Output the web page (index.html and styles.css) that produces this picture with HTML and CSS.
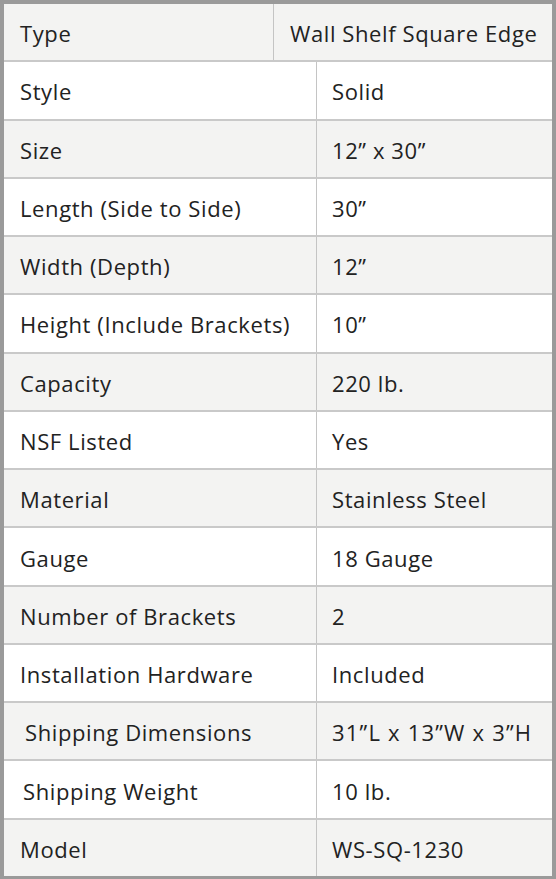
FILE: index.html
```html
<!DOCTYPE html>
<html>
<head>
<meta charset="utf-8">
<link rel="stylesheet" href="styles.css">
</head>
<body>
<div class="frame">
  <div class="row head"><div class="k">Type</div><div class="v">Wall Shelf Square Edge</div></div>
  <div class="row"><div class="k">Style</div><div class="v">Solid</div></div>
  <div class="row alt"><div class="k">Size</div><div class="v">12” x 30”</div></div>
  <div class="row"><div class="k">Length (Side to Side)</div><div class="v">30”</div></div>
  <div class="row alt"><div class="k">Width (Depth)</div><div class="v">12”</div></div>
  <div class="row"><div class="k">Height (Include Brackets)</div><div class="v">10”</div></div>
  <div class="row alt"><div class="k">Capacity</div><div class="v">220 lb.</div></div>
  <div class="row"><div class="k">NSF Listed</div><div class="v">Yes</div></div>
  <div class="row alt"><div class="k">Material</div><div class="v">Stainless Steel</div></div>
  <div class="row"><div class="k">Gauge</div><div class="v">18 Gauge</div></div>
  <div class="row alt"><div class="k">Number of Brackets</div><div class="v">2</div></div>
  <div class="row"><div class="k">Installation Hardware</div><div class="v">Included</div></div>
  <div class="row alt"><div class="k ind">Shipping Dimensions</div><div class="v wide">31”L x 13”W x 3”H</div></div>
  <div class="row"><div class="k ind2">Shipping Weight</div><div class="v">10 lb.</div></div>
  <div class="row alt last"><div class="k">Model</div><div class="v">WS-SQ-1230</div></div>
</div>
</body>
</html>
```
FILE: styles.css
```css
html, body { margin: 0; padding: 0; background: #fff; }
.frame {
  width: 548px;
  height: 872px;
  border-style: solid;
  border-color: #9a9a9a;
  border-width: 4px 4px 3px 4px;
  display: flex;
  flex-direction: column;
  font-family: "Open Sans", "Noto Sans", sans-serif;
  font-size: 22px;
  color: #222;
  letter-spacing: 0.6px;
}
.row {
  flex: 1;
  display: grid;
  grid-template-columns: 313px 1fr;
  border-bottom: 2px solid #c9c9c9;
  background: #fff;
}
.row.alt, .row.head { background: #f3f3f2; }
.row.last { border-bottom: none; }
.row.head { grid-template-columns: 270px 1fr; }
.k, .v { display: flex; align-items: center; padding-top: 2px; }
.k { padding-left: 16px; border-right: 1px solid #c4c4c4; }
.v { padding-left: 15px; }
.v.wide { letter-spacing: 1.2px; }
.head .v { padding-left: 16px; }
.k.ind { padding-left: 21px; }
.k.ind2 { padding-left: 19px; }
```
